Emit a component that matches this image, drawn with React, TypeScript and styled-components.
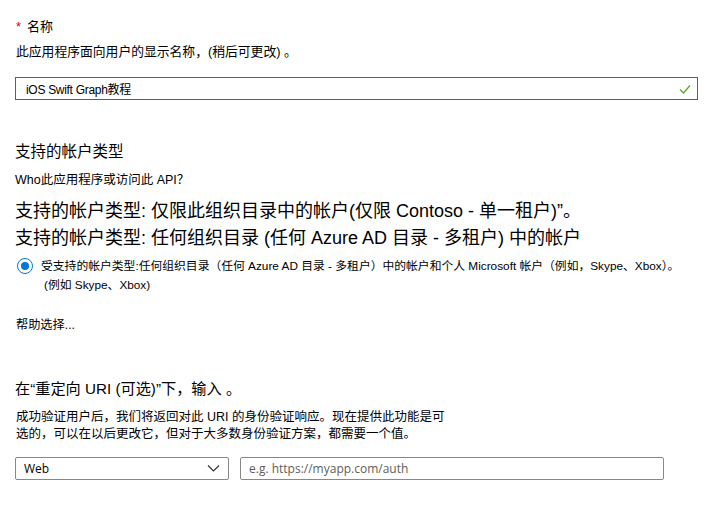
import React from 'react';
import styled, { createGlobalStyle } from 'styled-components';

const GlobalStyle = createGlobalStyle`
  html, body {
    margin: 0;
    padding: 0;
    background: #FFFFFF;
  }
  body {
    font-family: "Liberation Sans", "Noto Sans CJK SC", sans-serif;
    color: #000000;
  }
`
const Page = styled.div`
  width: 708px;
  height: 505px;
  box-sizing: border-box;
  padding: 17px 0 0 15px;
  overflow: hidden;
`
const Label = styled.div`
  font-size: 13px;
  line-height: 20px;
  padding-left: 1px;
`
const Star = styled.span`
  color: #E50000;
  margin-right: 6px;
`
const Description = styled.div`
  margin-top: 6px;
  font-size: 12.8px;
  line-height: 18px;
  padding-left: 1px;
  white-space: nowrap;
`
const NameInput = styled.div`
  margin-top: 16px;
  width: 683px;
  height: 23px;
  box-sizing: border-box;
  border: 1px solid #9136AE;
  display: flex;
  align-items: center;
  justify-content: space-between;
  padding: 0 6px 0 10px;
  font-size: 12px;
  letter-spacing: -0.3px;
`
const Heading = styled.div<{ $top: number; $size: number }>`
  margin-top: ${p => p.$top}px;
  font-size: ${p => p.$size}px;
  line-height: 20px;
  white-space: nowrap;
`
const Question = styled.div`
  margin-top: 10px;
  font-size: 12.5px;
  line-height: 16px;
`
const BigLine = styled.div<{ $top?: number }>`
  margin-top: ${p => p.$top || 0}px;
  font-size: 18px;
  line-height: 27px;
  white-space: nowrap;
`
const RadioRow = styled.div`
  margin-top: 4.5px;
  display: flex;
  align-items: center;
  gap: 8px;
  height: 18px;
  padding-left: 2px;
`
const RadioOuter = styled.span`
  width: 16px;
  height: 16px;
  box-sizing: border-box;
  border: 1.5px solid #0078D4;
  border-radius: 50%;
  display: flex;
  align-items: center;
  justify-content: center;
  flex-shrink: 0;
`
const RadioDot = styled.span`
  width: 8px;
  height: 8px;
  border-radius: 50%;
  background: #0078D4;
`
const RadioText = styled.span`
  font-size: 11.8px;
  line-height: 18px;
  white-space: nowrap;
`
const Example = styled.div`
  margin-top: 1px;
  padding-left: 29px;
  font-size: 11.8px;
  line-height: 18px;
`
const HelpLink = styled.div`
  margin-top: 23px;
  padding-left: 1px;
  font-size: 12.2px;
  line-height: 16px;
`
const Paragraph = styled.div`
  margin-top: 10.5px;
  padding-left: 1px;
  font-size: 12.5px;
  line-height: 17px;
  white-space: nowrap;
`
const FieldRow = styled.div`
  margin-top: 13.5px;
  display: flex;
  gap: 11px;
`
const Select = styled.div`
  width: 214px;
  height: 23px;
  box-sizing: border-box;
  border: 1px solid #8A8886;
  border-radius: 2px;
  display: flex;
  align-items: center;
  justify-content: space-between;
  padding: 0 8px 0 8px;
  font-family: "Open Sans", "Noto Sans CJK SC", sans-serif;
  font-size: 12px;
`
const UrlInput = styled.div`
  width: 424px;
  height: 23px;
  box-sizing: border-box;
  border: 1px solid #8A8886;
  border-radius: 2px;
  display: flex;
  align-items: center;
  padding: 0 8px;
  font-family: "Open Sans", "Noto Sans CJK SC", sans-serif;
  font-size: 12px;
  color: #605E5C;
`

const Check = () => (
  <svg width="12" height="10" viewBox="0 0 12 10">
    <path d="M1 5.5 L4.5 9 L11 1.5" fill="none" stroke="#5CA81E" strokeWidth="1.3" />
  </svg>
)

const Chevron = () => (
  <svg width="13" height="8" viewBox="0 0 13 8">
    <path d="M1 1.5 L6.5 7 L12 1.5" fill="none" stroke="#323130" strokeWidth="1.1" />
  </svg>
)

export default function App() {
  return (
    <Page>
      <GlobalStyle />
      <Label><Star>*</Star>名称</Label>
      <Description>此应用程序面向用户的显示名称，(稍后可更改) 。</Description>
      <NameInput>
        <span>iOS Swift Graph教程</span>
        <Check />
      </NameInput>

      <Heading $top={42} $size={15.5}>支持的帐户类型</Heading>
      <Question>Who此应用程序或访问此 API？</Question>
      <BigLine $top={10}>支持的帐户类型: 仅限此组织目录中的帐户(仅限 Contoso - 单一租户)”。</BigLine>
      <BigLine>支持的帐户类型: 任何组织目录 (任何 Azure AD 目录 - 多租户) 中的帐户</BigLine>
      <RadioRow>
        <RadioOuter><RadioDot /></RadioOuter>
        <RadioText>受支持的帐户类型:任何组织目录（任何 Azure AD 目录 - 多租户）中的帐户和个人 Microsoft 帐户（例如，Skype、Xbox）。</RadioText>
      </RadioRow>
      <Example>(例如 Skype、Xbox)</Example>
      <HelpLink>帮助选择...</HelpLink>

      <Heading $top={46} $size={15.2}>在“重定向 URI (可选)”下，输入 。</Heading>
      <Paragraph>
        成功验证用户后，我们将返回对此 URI 的身份验证响应。现在提供此功能是可<br />
        选的，可以在以后更改它，但对于大多数身份验证方案，都需要一个值。
      </Paragraph>
      <FieldRow>
        <Select>
          <span>Web</span>
          <Chevron />
        </Select>
        <UrlInput>e.g. https://myapp.com/auth</UrlInput>
      </FieldRow>
    </Page>
  );
}
